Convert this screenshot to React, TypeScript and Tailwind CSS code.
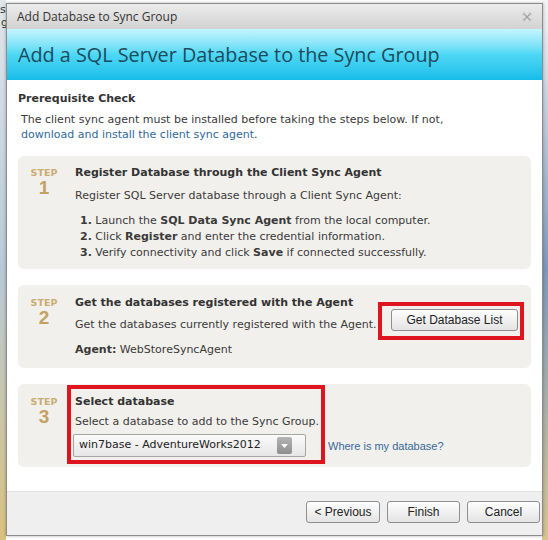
import { ReactNode } from 'react'

const body = "font-['DejaVu_Sans',Verdana,sans-serif]"

function StepBox({ n, className, children }: { n: number; className: string; children: ReactNode }) {
  return (
    <div className={`relative mx-[11px] flex rounded-[6px] bg-[#f2f0ec] ${className}`}>
      <div className="ml-[12px] flex w-[28px] flex-col items-center">
        <span className="text-[9.5px] font-bold leading-[16px] text-[#c9ad72]">STEP</span>
        <span className="-mt-[2px] font-['Liberation_Sans',Arial,sans-serif] text-[19px] font-bold leading-[18px] text-[#c2a262]">
          {n}
        </span>
      </div>
      <div className="ml-[17px] flex flex-1 flex-col">{children}</div>
    </div>
  )
}

function Btn({ label, className = '' }: { label: string; className?: string }) {
  return (
    <button
      className={`flex h-[22px] items-center justify-center rounded-[3px] border border-[#8f8f8f] bg-gradient-to-b from-[#ffffff] to-[#e3e3e3] font-['Liberation_Sans',Arial,sans-serif] text-[12px] text-[#222] shadow-[inset_0_1px_0_#fff] ${className}`}
    >
      {label}
    </button>
  )
}

export default function App() {
  return (
    <div className={`relative h-[540px] w-[548px] overflow-hidden bg-white ${body}`}>
      {/* page behind the modal */}
      <div className="absolute left-0 top-0 h-full w-[6px] bg-gradient-to-b from-[#dfe6ec] via-[#b8c9d6] to-[#d9c27e]" />
      <div className="absolute left-[0px] top-[4px] text-[11px] leading-[12px] text-[#333]">se</div>
      <div className="absolute left-[1px] top-[17px] text-[11px] leading-[12px] text-[#333] underline">g</div>
      <div className="absolute right-0 top-0 h-full w-[6px] bg-gradient-to-b from-[#f4f4f4] via-[#7d99bc] to-[#d6c48e]" />

      {/* dialog */}
      <div className="absolute left-[6px] top-[3px] flex h-[533px] w-[537px] flex-col border border-[#8c8c8c] bg-white shadow-[0_0_3px_rgba(0,0,0,0.3)]">
        <div className="flex h-[25px] items-center justify-between bg-gradient-to-b from-[#ececec] to-[#d2d2d2] pl-[10px] pr-[10px]">
          <span className="font-['Open_Sans',sans-serif] text-[12px] text-[#333]">Add Database to Sync Group</span>
          <svg width="10" height="10" viewBox="0 0 10 10" className="mt-[1px]">
            <path d="M1.5 1.5L8.5 8.5M8.5 1.5L1.5 8.5" stroke="#a0a0a0" strokeWidth="1.2" />
            <path d="M1 1h2.5M1 1v2.5M9 9h-2.5M9 9v-2.5M9 1h-2.5M9 1v2.5M1 9h2.5M1 9v-2.5" stroke="#c4c4c4" strokeWidth="1" fill="none" />
          </svg>
        </div>

        <div className="flex h-[51px] items-center bg-gradient-to-b from-[#c3f6fd] via-[#4dd8f5] to-[#14bce9] pl-[11px]">
          <h1 className="font-['Open_Sans',sans-serif] text-[19.8px] text-[#1c4b5c]">Add a SQL Server Database to the Sync Group</h1>
        </div>

        <div className="flex flex-1 flex-col pt-[11px] text-[11px] text-[#3a3a3a]">
          <div className="pl-[11px] font-bold leading-[16px] text-[#333]">Prerequisite Check</div>
          <p className="mt-[5px] pl-[14px] leading-[15px]">
            The client sync agent must be installed before taking the steps below. If not,
            <br />
            <span className="text-[#2f6a9c]">download and install the client sync agent</span>.
          </p>

          <StepBox n={1} className="mt-[14px] h-[113px] pt-[9px]">
            <div className="font-bold leading-[16px] text-[#333]">Register Database through the Client Sync Agent</div>
            <div className="mt-[7px] leading-[16px]">Register SQL Server database through a Client Sync Agent:</div>
            <ol className="mt-[9px] pl-[5px] leading-[16px]">
              <li>
                <b>1.</b> Launch the <b>SQL Data Sync Agent</b> from the local computer.
              </li>
              <li>
                <b>2.</b> Click <b>Register</b> and enter the credential information.
              </li>
              <li>
                <b>3.</b> Verify connectivity and click <b>Save</b> if connected successfully.
              </li>
            </ol>
          </StepBox>

          <StepBox n={2} className="mt-[16px] h-[83px] pt-[10px]">
            <div className="flex">
              <div className="flex flex-col">
                <div className="font-bold leading-[16px] text-[#333]">Get the databases registered with the Agent</div>
                <div className="mt-[6px] leading-[16px]">Get the databases currently registered with the Agent.</div>
                <div className="mt-[9px] leading-[16px]">
                  <b>Agent:</b> WebStoreSyncAgent
                </div>
              </div>
              <div className="relative ml-auto mr-[13px] mt-[14px] self-start">
                <Btn label="Get Database List" className="w-[127px]" />
                <div className="absolute -bottom-[9px] -left-[13px] -right-[6px] -top-[7px] border-[4px] border-[#e0141e]" />
              </div>
            </div>
          </StepBox>

          <StepBox n={3} className="mt-[16px] h-[83px] pt-[10px]">
            <div className="font-bold leading-[16px] text-[#333]">Select database</div>
            <div className="mt-[4px] leading-[16px]">Select a database to add to the Sync Group.</div>
            <div className="mt-[4px] flex items-center">
              <div className="-ml-[2px] flex h-[23px] w-[233px] items-center justify-between rounded-[2px] border border-[#a5a5a5] bg-gradient-to-b from-[#fbfbfb] to-[#e6e6e6] pl-[5px] pr-[13px]">
                <span className="text-[11px] text-[#222]">win7base - AdventureWorks2012</span>
                <span className="flex h-[17px] w-[15px] items-center justify-center rounded-[2px] bg-gradient-to-b from-[#b5b5b5] to-[#8e8e8e]">
                  <svg width="7" height="4" viewBox="0 0 7 4">
                    <path d="M0 0h7L3.5 4z" fill="#fff" />
                  </svg>
                </span>
              </div>
              <span className="ml-[22px] mt-[1px] font-['Liberation_Sans',Arial,sans-serif] text-[11px] text-[#36699a]">
                Where is my database?
              </span>
            </div>
            <div className="absolute left-[49px] top-[1px] h-[79px] w-[258px] border-[4px] border-[#e0141e]" />
          </StepBox>
        </div>

        <div className="flex h-[44px] items-start justify-end gap-[7px] border-t border-[#e2e2e2] bg-[#efefef] pr-[2px] pt-[9px]">
          <Btn label="< Previous" className="w-[74px]" />
          <Btn label="Finish" className="w-[73px]" />
          <Btn label="Cancel" className="w-[73px]" />
        </div>
      </div>
    </div>
  )
}
